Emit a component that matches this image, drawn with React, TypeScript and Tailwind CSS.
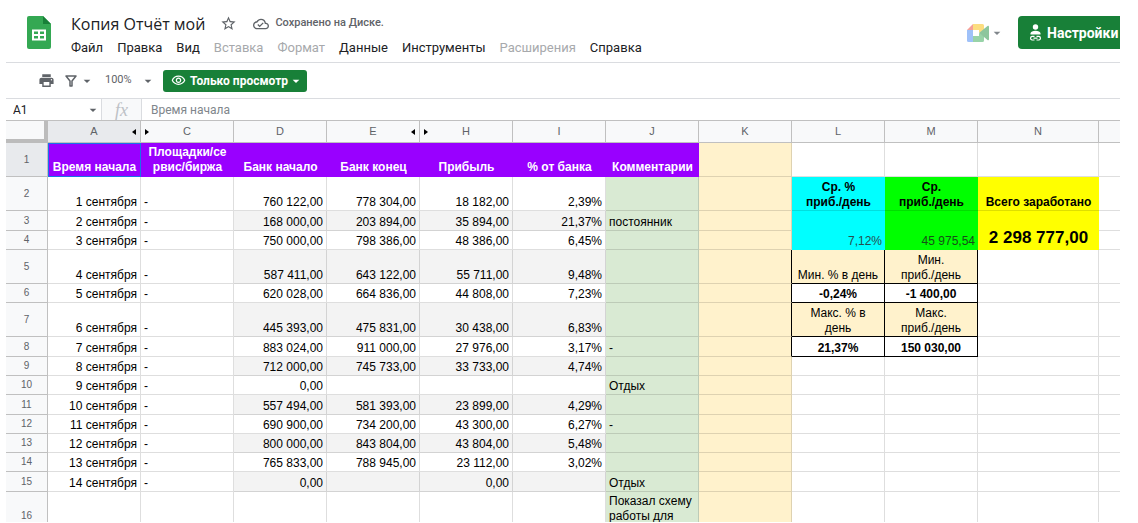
import React from "react";
import { MdArrowDropDown, MdOutlineCloudDone, MdOutlineVisibility, MdPrint, MdStarBorder } from "react-icons/md";

const menus = [
  { label: "Файл" },
  { label: "Правка" },
  { label: "Вид" },
  { label: "Вставка", disabled: true },
  { label: "Формат", disabled: true },
  { label: "Данные" },
  { label: "Инструменты" },
  { label: "Расширения", disabled: true },
  { label: "Справка" },
];

type Row = {
  n: number;
  h: string;
  date: string;
  site: string;
  start: string;
  end: string;
  profit: string;
  pct: string;
  note: string;
};

const SHORT = "h-[19px]";
const MID = "h-[20px]";
const TALL = "h-[34px]";

const rows: Row[] = [
  { n: 2, h: TALL, date: "1 сентября", site: "-", start: "760 122,00", end: "778 304,00", profit: "18 182,00", pct: "2,39%", note: "" },
  { n: 3, h: MID, date: "2 сентября", site: "-", start: "168 000,00", end: "203 894,00", profit: "35 894,00", pct: "21,37%", note: "постоянник" },
  { n: 4, h: SHORT, date: "3 сентября", site: "-", start: "750 000,00", end: "798 386,00", profit: "48 386,00", pct: "6,45%", note: "" },
  { n: 5, h: TALL, date: "4 сентября", site: "-", start: "587 411,00", end: "643 122,00", profit: "55 711,00", pct: "9,48%", note: "" },
  { n: 6, h: SHORT, date: "5 сентября", site: "-", start: "620 028,00", end: "664 836,00", profit: "44 808,00", pct: "7,23%", note: "" },
  { n: 7, h: TALL, date: "6 сентября", site: "-", start: "445 393,00", end: "475 831,00", profit: "30 438,00", pct: "6,83%", note: "" },
  { n: 8, h: MID, date: "7 сентября", site: "-", start: "883 024,00", end: "911 000,00", profit: "27 976,00", pct: "3,17%", note: "-" },
  { n: 9, h: SHORT, date: "8 сентября", site: "-", start: "712 000,00", end: "745 733,00", profit: "33 733,00", pct: "4,74%", note: "" },
  { n: 10, h: SHORT, date: "9 сентября", site: "-", start: "0,00", end: "", profit: "", pct: "", note: "Отдых" },
  { n: 11, h: MID, date: "10 сентября", site: "-", start: "557 494,00", end: "581 393,00", profit: "23 899,00", pct: "4,29%", note: "" },
  { n: 12, h: SHORT, date: "11 сентября", site: "-", start: "690 900,00", end: "734 200,00", profit: "43 300,00", pct: "6,27%", note: "-" },
  { n: 13, h: SHORT, date: "12 сентября", site: "-", start: "800 000,00", end: "843 804,00", profit: "43 804,00", pct: "5,48%", note: "" },
  { n: 14, h: SHORT, date: "13 сентября", site: "-", start: "765 833,00", end: "788 945,00", profit: "23 112,00", pct: "3,02%", note: "" },
  { n: 15, h: MID, date: "14 сентября", site: "-", start: "0,00", end: "", profit: "0,00", pct: "", note: "Отдых" },
  { n: 16, h: "h-[49px]", date: "", site: "", start: "", end: "", profit: "", pct: "", note: "Показал схему работы для" },
];

const line = "border-r border-b border-black/13 px-[3px] leading-[15px] align-bottom";
const boxed = "border-r border-b border-black px-[2px] text-center leading-[15px] align-bottom";
const label = "border-b border-black/13 px-[2px] text-center align-bottom leading-[15px] font-bold";
const head = "border-r border-b border-[#c0c0c0] p-0 font-normal";

function Summary({ n }: { n: number }) {
  const blank = <td className={line} />;
  switch (n) {
    case 2:
      return (
        <>
          <td className={`${label} bg-[#00ffff]`}>Ср. %<br />приб./день</td>
          <td className={`${label} bg-[#00ff00]`}>Ср.<br />приб./день</td>
          <td className={`${label} bg-[#ffff00] whitespace-nowrap`}>Всего заработано</td>
        </>
      );
    case 3:
      return (
        <>
          <td rowSpan={2} className="bg-[#00ffff] border-b border-transparent px-[3px] text-right align-bottom leading-[15px] text-[#274e4e]">7,12%</td>
          <td rowSpan={2} className="bg-[#00ff00] border-b border-transparent px-[3px] text-right align-bottom leading-[15px] text-[#174f17]">45 975,54</td>
          <td rowSpan={2} className="bg-[#ffff00] border-b border-transparent px-[2px] text-center align-bottom text-[17px] leading-[22px] font-bold">2 298 777,00</td>
        </>
      );
    case 4:
      return null;
    case 5:
      return (
        <>
          <td className={`${boxed} bg-[#fff2cc]`}>Мин. % в день</td>
          <td className={`${boxed} bg-[#fff2cc]`}>Мин.<br />приб./день</td>
          {blank}
        </>
      );
    case 6:
      return (
        <>
          <td className={`${boxed} font-bold`}>-0,24%</td>
          <td className={`${boxed} font-bold`}>-1 400,00</td>
          {blank}
        </>
      );
    case 7:
      return (
        <>
          <td className={`${boxed} bg-[#fff2cc]`}>Макс. % в<br />день</td>
          <td className={`${boxed} bg-[#fff2cc]`}>Макс.<br />приб./день</td>
          {blank}
        </>
      );
    case 8:
      return (
        <>
          <td className={`${boxed} font-bold`}>21,37%</td>
          <td className={`${boxed} font-bold`}>150 030,00</td>
          {blank}
        </>
      );
    default:
      return (
        <>
          {blank}
          {blank}
          {blank}
        </>
      );
  }
}

function ColumnHead({ name, left, right, selected }: { name: string; left?: boolean; right?: boolean; selected?: boolean }) {
  return (
    <th scope="col" className={`${head} ${selected ? "bg-[#e8eaed]" : "bg-[#f8f9fa]"}`}>
      <div className="flex items-center px-1">
        <span className="w-2">
          {left && <svg viewBox="0 0 4 6" className="h-[6px] w-1" aria-hidden="true"><path d="M0 0L4 3L0 6Z" fill="#000" /></svg>}
        </span>
        <span className="flex-1 text-center">{name}</span>
        <span className="flex w-2 justify-end">
          {right && <svg viewBox="0 0 4 6" className="h-[6px] w-1" aria-hidden="true"><path d="M4 0L0 3L4 6Z" fill="#000" /></svg>}
        </span>
      </div>
    </th>
  );
}

function SheetsLogo() {
  return (
    <svg viewBox="0 0 24 33" className="h-[33px] w-6 shrink-0" aria-hidden="true">
      <path d="M2 0H16L24 8V31a2 2 0 0 1-2 2H2a2 2 0 0 1-2-2V2a2 2 0 0 1 2-2Z" fill="#34a853" />
      <path d="M16 0L24 8H16Z" fill="#188038" />
      <path fillRule="evenodd" d="M5 13.500H19V24.500H5ZM7 15.500V18H11V15.500ZM13 15.500V18H17V15.500ZM7 20V22.500H11V20ZM13 20V22.500H17V20Z" fill="#fff" />
    </svg>
  );
}

function MeetLogo() {
  return (
    <svg viewBox="0 0 22 18" className="h-[18px] w-[22px] opacity-50" aria-hidden="true">
      <path d="M0 6L6 0V6Z" fill="#ea4335" />
      <path d="M0 6H6V18H1.500A1.500 1.500 0 0 1 0 16.500Z" fill="#4285f4" />
      <path d="M6 0H15.500A1.500 1.500 0 0 1 17 1.500V6L12 9V6H6Z" fill="#fbbc04" />
      <path d="M6 12H12V9L17 12V16.500A1.500 1.500 0 0 1 15.500 18H6Z" fill="#34a853" />
      <path d="M12 9L20.500 2Q22 1.200 22 3V15Q22 16.800 20.500 16L17 13Z" fill="#1e8e3e" />
    </svg>
  );
}

function AccessIcon() {
  return (
    <svg viewBox="0 0 13 17" className="h-[17px] w-[13px] shrink-0" aria-hidden="true">
      <circle cx="6.500" cy="3" r="2.700" fill="#fff" />
      <path d="M1.500 10.500V9.500C1.500 7.500 4 6.700 6.500 6.700S11.500 7.500 11.500 9.500V10.500Z" fill="#fff" />
      <path d="M5.500 12.300H3A1.900 1.900 0 0 0 3 16H5.500M7.500 12.300H10A1.900 1.900 0 0 1 10 16H7.500M4.500 14.200H8.500" fill="none" stroke="#fff" strokeWidth="1.200" />
    </svg>
  );
}

export default function App() {
  return (
    <div className="h-screen overflow-hidden bg-white pr-[18px] pb-px pl-[6px] font-['Roboto',sans-serif] text-[#202124]">
      <div className="flex h-full flex-col overflow-hidden">
        <header className="flex h-[63px] shrink-0 border-b border-[#dadce0] pt-3 pl-[21px]">
          <div className="pt-1"><SheetsLogo /></div>
          <div className="flex flex-1 flex-col pl-5">
            <div className="flex h-[23px] items-center">
              <h1 className="font-['Open_Sans',sans-serif] text-base leading-6 whitespace-nowrap">Копия Отчёт мой</h1>
              <button aria-label="Пометить" className="ml-[15px] text-[#5f6368]"><MdStarBorder size={17} /></button>
              <button className="ml-4 flex items-center gap-[6px] text-[11px] font-medium text-[#5f6368]">
                <MdOutlineCloudDone size={16} />
                Сохранено на Диске.
              </button>
            </div>
            <nav className="flex h-[26px] items-center gap-[14px] text-[13px]">
              {menus.map((m) => (
                <button key={m.label} disabled={m.disabled} className={m.disabled ? "text-[#a7a9ac]" : ""}>{m.label}</button>
              ))}
            </nav>
          </div>
          <button aria-label="Видеовстреча" className="mt-1 mr-2 flex h-[33px] w-12 items-center justify-center rounded-full text-[#80868b]">
            <MeetLogo />
            <MdArrowDropDown size={16} />
          </button>
          <button className="mt-1 flex h-[33px] w-[102px] items-center gap-[5px] rounded-l bg-[#188038] pl-[11px] text-sm font-bold whitespace-nowrap text-white">
            <AccessIcon />
            Настройки
          </button>
        </header>

        <div className="flex h-9 shrink-0 items-center border-b border-[#dadce0] pl-8 text-[#5f6368]">
          <button aria-label="Печать"><MdPrint size={17} /></button>
          <button aria-label="Фильтр" className="ml-[10px] flex items-center gap-[2px]">
            <svg viewBox="0 0 12 12" className="h-3 w-3" aria-hidden="true">
              <path d="M1 1H11L7 6V11H5V6Z" fill="none" stroke="#5f6368" strokeWidth="1.500" strokeLinejoin="round" />
            </svg>
            <MdArrowDropDown size={16} />
          </button>
          <div className="ml-[10px] flex items-center">
            <select aria-label="Масштаб" className="w-[35px] appearance-none bg-transparent text-[11px]" defaultValue="100%">
              <option>100%</option>
            </select>
            <MdArrowDropDown size={16} />
          </div>
          <button className="ml-[7px] flex h-[22px] items-center rounded-[3px] bg-[#188038] pr-[3px] pl-2 text-xs font-bold whitespace-nowrap text-white">
            <MdOutlineVisibility size={15} className="mr-1" />
            Только просмотр
            <MdArrowDropDown size={16} />
          </button>
        </div>

        <div className="flex h-[21px] shrink-0 items-center text-xs">
          <div className="flex w-[95px] items-center justify-between pl-[7px]">
            <input aria-label="Поле имени" defaultValue="A1" className="w-12 bg-transparent outline-none" />
            <MdArrowDropDown size={16} className="text-[#5f6368]" />
          </div>
          <div className="flex h-full w-[41px] items-center justify-center border-x border-[#dadce0] bg-[#f8f9fa] font-['Liberation_Serif',serif] text-lg italic text-[#bdc1c6]">fx</div>
          <input aria-label="Строка формул" defaultValue="Время начала" className="min-w-0 flex-1 bg-transparent pl-[9px] text-[#80868b] outline-none" />
        </div>

        <div className="min-h-0 flex-1 overflow-hidden border-t border-[#c0c0c0]">
          <table className="w-full table-fixed border-separate border-spacing-0 font-['Liberation_Sans',sans-serif] text-xs text-black">
            <colgroup>
              <col className="w-[42px]" />
              {["A", "C", "D", "E", "H", "I", "J", "K", "L", "M"].map((c) => <col key={c} className="w-[93px]" />)}
              <col className="w-[121px]" />
              <col />
            </colgroup>
            <thead>
              <tr className="h-[22px] text-[11px] text-[#5f6368]">
                <td className="border-r-4 border-b-4 border-[#bcbcbc] bg-[#f8f9fa] p-0" />
                <ColumnHead name="A" right selected />
                <ColumnHead name="C" left />
                <ColumnHead name="D" />
                <ColumnHead name="E" right />
                <ColumnHead name="H" left />
                <ColumnHead name="I" />
                <ColumnHead name="J" />
                <ColumnHead name="K" />
                <ColumnHead name="L" />
                <ColumnHead name="M" />
                <ColumnHead name="N" />
                <td className="border-b border-[#c0c0c0] bg-[#f8f9fa] p-0" />
              </tr>
            </thead>
            <tbody>
              <tr className="h-[34px]">
                <th scope="row" className={`${head} bg-[#e8eaed] text-[10px] text-[#5f6368]`}>1</th>
                {["Время начала", "Площадки/се рвис/биржа", "Банк начало", "Банк конец", "Прибыль", "% от банка", "Комментарии"].map((t, i) => (
                  <td key={t} className={`bg-[#9900ff] p-0 pb-[2px] text-center align-bottom leading-[15px] font-bold text-white ${i === 0 ? "inset-ring inset-ring-[#1a73e8]" : ""}`}>{t}</td>
                ))}
                <td className={`${line} bg-[#fff2cc]`} />
                <td className={line} />
                <td className={line} />
                <td className={line} />
                <td className="border-b border-black/13 p-0" />
              </tr>
              {rows.map((r) => {
                const stripe = r.n % 2 === 1 ? "bg-[#f3f3f3]" : "";
                return (
                  <tr key={r.n} className={r.h}>
                    <th scope="row" className={`${head} bg-[#f8f9fa] text-[10px] text-[#5f6368]`}>{r.n}</th>
                    <td className={`${line} text-right`}>{r.date}</td>
                    <td className={line}>{r.site}</td>
                    <td className={`${line} ${stripe} text-right`}>{r.start}</td>
                    <td className={`${line} ${stripe} text-right`}>{r.end}</td>
                    <td className={`${line} ${stripe} text-right`}>{r.profit}</td>
                    <td className={`${line} ${stripe} text-right`}>{r.pct}</td>
                    <td className={`border-r border-b border-black/13 bg-[#d9ead3] px-[3px] leading-[15px] ${r.n === 16 ? "pt-[2px] align-top" : "align-bottom"}`}>{r.note}</td>
                    <td className={`border-r border-b bg-[#fff2cc] p-0 ${r.n >= 5 && r.n <= 8 ? "border-r-black border-b-black/13" : "border-black/13"}`} />
                    <Summary n={r.n} />
                    <td className="border-b border-black/13 p-0" />
                  </tr>
                );
              })}
            </tbody>
          </table>
        </div>
      </div>
    </div>
  );
}
